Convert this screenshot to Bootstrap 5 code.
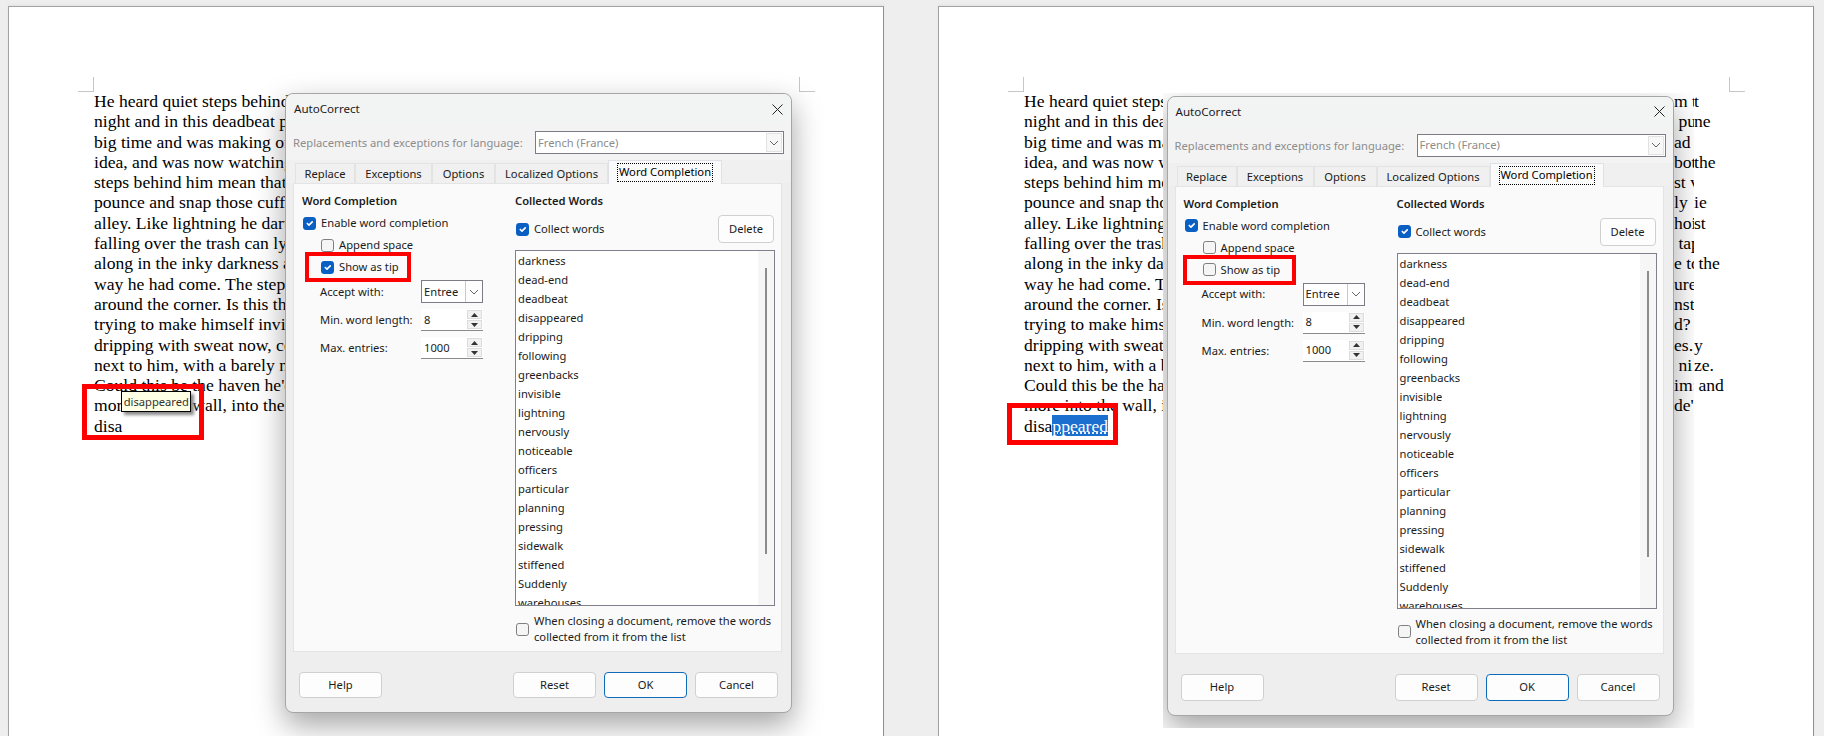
<!DOCTYPE html>
<html lang="en">
<head>
    <title>AutoCorrect - Word Completion</title>
    <meta name="viewport" content="width=device-width, initial-scale=1">
    <link href="https://cdn.jsdelivr.net/npm/bootstrap@5.3.0/dist/css/bootstrap.min.css" rel="stylesheet">
    <script src="https://cdn.jsdelivr.net/npm/bootstrap@5.3.0/dist/js/bootstrap.bundle.min.js"></script>
    <style>
        html, body { height: 736px; overflow: hidden; }
        body { background: #eeeeee; padding: 6px 0 0 8px; gap: 54px; }
        .doc-page {
            width: 876px;
            height: 730px;
            flex: none;
            background: #fff;
            border: 1px solid #a2a2a2;
            border-bottom: 0;
            border-right-color: #8f8f8f;
            padding: 84px 0 0 85px;
            box-shadow: 0 -2px 2px #e6e6e6;
        }
        .doc-lines {
            overflow: hidden;
            white-space: nowrap;
            font: 17.6px/20.3px "Liberation Serif", serif;
            color: #000;
        }
        .lines-a { width: 197px; }
        .lines-b { width: 146px; }
        .doc-tail {
            top: 84px;
            white-space: pre;
            font: 17.6px/20.3px "Liberation Serif", serif;
            color: #000;
        }
        /* tail still on the page, right of the pasted dialog shot */
        .tail-page { left: 755px; }
        /* tail that is part of the pasted dialog shot */
        .tail-shot { left: 511px; top: -2px; width: 20px; overflow: hidden; }
        .crop-mark { width: 16px; height: 15px; top: 70px; border: 0 solid #c6c6c6; }
        .crop-l { left: 69px; border-right-width: 1px; border-bottom-width: 1px; }
        .crop-r { left: 790px; border-left-width: 1px; border-bottom-width: 1px; }
        .pick-text {
            background: #1a6fcf;
            color: #fff;
            padding: .5px 0;
            text-decoration: underline dotted #fff;
        }
        .tip-bubble {
            left: 112.3px;
            top: 383.7px;
            width: 70px;
            height: 21px;
            background: #ffffe6;
            border: 1px solid #000;
            box-shadow: 3px 3px 3px #8a8a8a;
            font: 11.2px/19px "Noto Sans", sans-serif;
            color: #333;
            text-align: center;
            z-index: 4;
        }
        .red-box { border: 5px solid #f00; z-index: 3; }
        .red-disa-a { left: 73px; top: 377px; width: 122px; height: 56px; }
        .red-disa-b { left: 67.7px; top: 396px; width: 111.3px; height: 42px; }
        .red-tip-a { left: 19px; top: 158.3px; width: 106px; height: 29.4px; border-width: 4px; }
        .red-tip-b { left: 15.5px; top: 158.4px; width: 113px; height: 30.5px; border-width: 4px; }

        .ac-dialog {
            width: 507px;
            height: 620px;
            background: #eeeeee;
            border: 1px solid #a6a6a6;
            border-radius: 8px;
            box-shadow: 0 12px 30px rgba(0, 0, 0, .36);
            font: 11.2px/16px "Noto Sans", sans-serif;
            color: #1b1b1b;
        }
        .dialog-a { left: 276px; top: 86px; z-index: 2; }
        .dialog-b { margin: 2.6px 0 0 3.5px; }
        .shot-patch { left: 224px; top: 86px; width: 531px; height: 635px; background: #fff; overflow: hidden; z-index: 2; }
        .ac-title { height: 30px; background: #f2f3f3; border-radius: 8px 8px 0 0; padding: 0 8px; font-size: 11.6px; }
        .ac-lang { height: 43px; background: #f3f3f3; padding: 7px 7px 0 7px; color: #8c8c8c; }
        .ac-box { height: 23px; background: #fff; border: 1px solid #7c7c86; }
        .lang-box { width: 249px; margin-left: auto; padding-left: 2px; }
        .lang-arrow { width: 16px; height: 19px; margin: 0 1px 0 auto; border: 1px solid #e2e2e2; background: #f7f7f7; }
        .lang-label { line-height: 23px; white-space: nowrap; }
        .ac-tabs { padding-left: 9px; height: 23px; border: 0; background: #f0f0f0; align-items: flex-end; margin-top: -7px; flex-wrap: nowrap; }
        .ac-tabs .nav-link {
            height: 20px;
            padding: 2px 0 0;
            margin: 0;
            border: 1px solid #e3e3e3;
            border-bottom: 0;
            border-radius: 0;
            background: #f0f0f0;
            color: #1b1b1b;
            text-align: center;
            white-space: nowrap;
        }
        .ac-tabs .nav-link.active { height: 24px; margin-bottom: -1px; padding: 2px 0 0; background: #fafafa; z-index: 1; position: relative; }
        .tab-focus { display: block; margin: 0 8px; height: 19px; border: 1px dotted #000; line-height: 16px; }
        .tab-w1 { width: 60px; } .tab-w2 { width: 77px; } .tab-w3 { width: 63px; } .tab-w4 { width: 113px; } .tab-w5 { width: 114px; }
        .ac-panel { height: 468.7px; margin: 0 9px 0 7px; background: #fafafa; border: 1px solid #e4e4e4; padding: 8px 6px 0 8px; }
        .col-left { width: 213px; flex: none; }
        .col-right { width: 260px; flex: none; }
        .ac-head { height: 17px; line-height: 17px; }
        .ac-row { height: 16px; margin: 6px 0 0 1px; gap: 5px; }
        .ac-row.sub-row { margin-left: 19px; }
        .ac-check {
            width: 13px;
            height: 13px;
            margin: 0;
            flex: none;
            border: 1px solid #7f7f7f;
            border-radius: 3px;
            background-color: #f5f5f5;
        }
        .ac-check:checked { background-color: #0a5fc2; border-color: #0a5fc2; }
        .ac-field { margin: 5px 0 0 18px; }
        .spin-field { margin-top: 6px; }
        .field-name { width: 101px; flex: none; }
        .accept-box { width: 62px; padding-left: 2px; height: 23px; }
        .accept-arrow { width: 17px; height: 21px; margin-left: auto; border-left: 1px solid #c9c9c9; background: #fdfdfd; }
        .spin-box { width: 62px; height: 22px; background: #fff; border-bottom: 1px solid #8a8a8a; padding-left: 3px; }
        .spin-btns { width: 15px; margin: 0 1px 0 auto; gap: 1px; }
        .spin-btns span { height: 9px; background: #f1f1f1; border: 1px solid #dcdcdc; }
        .delete-row { height: 28px; margin: 6px 0 0 1px; gap: 5px; }
        .ac-btn {
            font: 11.2px/16px "Noto Sans", sans-serif;
            color: #1b1b1b;
            background: #fdfdfd;
            border: 1px solid #d0d0d0;
            border-radius: 4px;
            padding: 0;
        }
        .del-btn { width: 56px; height: 28px; margin: 0 1px 0 auto; }
        .word-list { width: 260px; height: 356px; margin-top: 7px; background: #fff; border: 1px solid #80808c; overflow: hidden; }
        .word-list .words { padding-left: 2px; line-height: 19px; }
        .list-scroll { width: 16px; background: #f6f6f6; margin-left: auto; flex: none; }
        .list-thumb { width: 2px; height: 286px; background: #8c8c8c; margin: 17px 0 0 7px; }
        .close-row { margin: 7px 0 0 1px; gap: 5px; white-space: nowrap; }
        .ac-foot { padding: 20px 13px 0 13px; gap: 8px; }
        .ac-foot .ac-btn { width: 83px; height: 26.3px; }
        .ac-foot .ok-btn { border-color: #0f6cbd; }
    </style>
</head>
<body class="d-flex">

    <div class="doc-page position-relative" id="page-a">
        <span class="crop-mark crop-l position-absolute"></span>
        <span class="crop-mark crop-r position-absolute"></span>
        <div class="doc-lines lines-a" id="lines-a"></div>
        <div class="red-box red-disa-a position-absolute"></div>
        <div class="tip-bubble position-absolute">disappeared</div>
    </div>

    <div class="doc-page position-relative" id="page-b">
        <span class="crop-mark crop-l position-absolute"></span>
        <span class="crop-mark crop-r position-absolute"></span>
        <div class="doc-lines lines-b" id="lines-b"></div>
        <div class="doc-tail tail-page position-absolute">t
ne

the

ie
st

 the



y
ze.
 and</div>
        <div class="shot-patch position-absolute" id="patch-b"></div>
        <div class="red-box red-disa-b position-absolute"></div>
    </div>

    <script>
        const LINES = [
            "He heard quiet steps behind",
            "night and in this deadbeat part",
            "big time and was making off",
            "idea, and was now watching him",
            "steps behind him mean that",
            "pounce and snap those cuffs",
            "alley. Like lightning he darted",
            "falling over the trash can lying",
            "along in the inky darkness and",
            "way he had come. The steps",
            "around the corner. Is this the",
            "trying to make himself invisible",
            "dripping with sweat now, cold",
            "next to him, with a barely noticeable",
            "Could this be the haven he'd",
            "more into the wall, into the"
        ];
        const WORDS = ["darkness", "dead-end", "deadbeat", "disappeared", "dripping", "following", "greenbacks",
            "invisible", "lightning", "nervously", "noticeable", "officers", "particular", "planning",
            "pressing", "sidewalk", "stiffened", "Suddenly", "warehouses"];
        const SHOT_TAIL = ["m t", " pu", "ad", "bot", "st v", "ly", "hoi", " tap", "e to", "ure", "nst", "d?", "es.", " ni", "im:", "de'"];

        const chevron = '<svg width="10" height="6" viewBox="0 0 10 6"><path d="M1 1l4 4 4-4" fill="none" stroke="#666" stroke-width="1"/></svg>';
        const spinUp = '<svg width="7" height="4" viewBox="0 0 7 4"><path d="M3.5 0L7 4H0z" fill="#333"/></svg>';
        const spinDown = '<svg width="7" height="4" viewBox="0 0 7 4"><path d="M0 0h7L3.5 4z" fill="#333"/></svg>';

        function spinField(name, value) {
            return `<div class="ac-field spin-field d-flex align-items-center">
                <span class="field-name">${name}</span>
                <div class="spin-box d-flex align-items-center">${value}
                    <div class="spin-btns d-flex flex-column">
                        <span class="d-flex align-items-center justify-content-center">${spinUp}</span>
                        <span class="d-flex align-items-center justify-content-center">${spinDown}</span>
                    </div>
                </div>
            </div>`;
        }

        function dialogHtml(showTip, extraClass, redClass) {
            return `<div class="ac-dialog ${extraClass}">
                <div class="ac-title d-flex align-items-center justify-content-between">
                    <span>AutoCorrect</span>
                    <svg width="11" height="11" viewBox="0 0 11 11"><path d="M.5.5l10 10M10.5.5l-10 10" stroke="#222" stroke-width="1"/></svg>
                </div>
                <div class="ac-lang d-flex align-items-start">
                    <span class="lang-label">Replacements and exceptions for language:</span>
                    <div class="ac-box lang-box d-flex align-items-center">French (France)
                        <span class="lang-arrow d-flex align-items-center justify-content-center">${chevron}</span>
                    </div>
                </div>
                <ul class="nav nav-tabs ac-tabs">
                    <li class="nav-item"><span class="nav-link tab-w1 d-block">Replace</span></li>
                    <li class="nav-item"><span class="nav-link tab-w2 d-block">Exceptions</span></li>
                    <li class="nav-item"><span class="nav-link tab-w3 d-block">Options</span></li>
                    <li class="nav-item"><span class="nav-link tab-w4 d-block">Localized Options</span></li>
                    <li class="nav-item"><span class="nav-link active tab-w5 d-block"><span class="tab-focus">Word Completion</span></span></li>
                </ul>
                <div class="ac-panel d-flex">
                    <div class="col-left">
                        <div class="ac-head fw-semibold">Word Completion</div>
                        <div class="ac-row d-flex align-items-center"><input class="form-check-input ac-check" type="checkbox" checked>Enable word completion</div>
                        <div class="ac-row sub-row d-flex align-items-center"><input class="form-check-input ac-check" type="checkbox">Append space</div>
                        <div class="ac-row sub-row d-flex align-items-center"><input class="form-check-input ac-check" type="checkbox" ${showTip ? "checked" : ""}>Show as tip</div>
                        <div class="ac-field d-flex align-items-center">
                            <span class="field-name">Accept with:</span>
                            <div class="ac-box accept-box d-flex align-items-center">Entree
                                <span class="accept-arrow d-flex align-items-center justify-content-center">${chevron}</span>
                            </div>
                        </div>
                        ${spinField("Min. word length:", "8")}
                        ${spinField("Max. entries:", "1000")}
                    </div>
                    <div class="col-right">
                        <div class="ac-head fw-semibold">Collected Words</div>
                        <div class="delete-row d-flex align-items-center">
                            <input class="form-check-input ac-check" type="checkbox" checked>Collect words
                            <button class="ac-btn del-btn" type="button">Delete</button>
                        </div>
                        <div class="word-list d-flex">
                            <div class="words">${WORDS.map(w => `<div>${w}</div>`).join("")}</div>
                            <div class="list-scroll"><div class="list-thumb"></div></div>
                        </div>
                        <div class="close-row d-flex align-items-center">
                            <input class="form-check-input ac-check" type="checkbox">
                            <span>When closing a document, remove the words<br>collected from it from the list</span>
                        </div>
                    </div>
                </div>
                <div class="ac-foot d-flex">
                    <button class="ac-btn me-auto" type="button">Help</button>
                    <button class="ac-btn" type="button">Reset</button>
                    <button class="ac-btn ok-btn" type="button">OK</button>
                    <button class="ac-btn" type="button">Cancel</button>
                </div>
                <div class="red-box ${redClass} position-absolute"></div>
            </div>`;
        }

        const lineDivs = LINES.map(l => `<div>${l}</div>`).join("");
        document.getElementById("lines-a").innerHTML = lineDivs + "<div>disa</div>";
        document.getElementById("lines-b").innerHTML = lineDivs + '<div>disa<span class="pick-text">ppeared</span></div>';

        document.getElementById("page-a").insertAdjacentHTML("beforeend", dialogHtml(true, "dialog-a position-absolute", "red-tip-a"));
        document.getElementById("patch-b").innerHTML = dialogHtml(false, "dialog-b position-relative", "red-tip-b")
            + `<div class="doc-tail tail-shot position-absolute">${SHOT_TAIL.join("\n")}</div>`;
    </script>

</body>
</html>
